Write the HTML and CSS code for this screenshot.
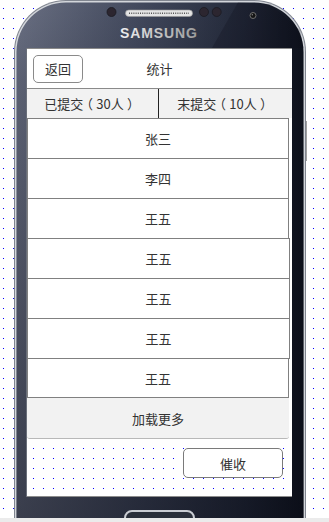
FILE: index.html
```html
<!DOCTYPE html>
<html lang="zh-CN">
<head>
<meta charset="utf-8">
<title>统计</title>
<link rel="stylesheet" href="styles.css">
</head>
<body>
<div class="stage">
  <svg class="device" width="329" height="518" viewBox="0 0 329 518" aria-hidden="true">
    <defs>
      <pattern id="dots" width="10" height="10" patternUnits="userSpaceOnUse" x="3" y="8">
        <rect width="1" height="1" fill="#0000ff"/>
      </pattern>
      <linearGradient id="body" x1="0" y1="0" x2="1" y2="0">
        <stop offset="0" stop-color="#6a7083"/>
        <stop offset="0.45" stop-color="#40475b"/>
        <stop offset="0.8" stop-color="#222838"/>
        <stop offset="1" stop-color="#0e121c"/>
      </linearGradient>
      <linearGradient id="shade" x1="0" y1="0" x2="0" y2="1">
        <stop offset="0" stop-color="#080a14" stop-opacity="0"/>
        <stop offset="0.15" stop-color="#080a14" stop-opacity="0.15"/>
        <stop offset="1" stop-color="#080a14" stop-opacity="0.5"/>
      </linearGradient>
      <linearGradient id="logo" x1="0" y1="0" x2="1" y2="0">
        <stop offset="0" stop-color="#efefef"/>
        <stop offset="1" stop-color="#9c9c9c"/>
      </linearGradient>
    </defs>
    <rect width="329" height="518" fill="#fff"/>
    <rect width="329" height="518" fill="url(#dots)"/>
    <rect x="305" y="121" width="2" height="40" fill="#a0a0a0"/>
    <path d="M14 530 V52 A52 52 0 0 1 66 0 H254 A52 52 0 0 1 306 52 V530 Z" fill="#80858f"/>
    <path d="M15 530 V52 A51 51 0 0 1 66 1 H254 A51 51 0 0 1 305 52 V530 Z" fill="#d3d6db"/>
    <path d="M16.5 530 V52 A49.5 49.5 0 0 1 66 2.5 H254 A49.5 49.5 0 0 1 303.5 52 V530 Z" fill="url(#body)"/>
    <path d="M16.5 530 V52 A49.5 49.5 0 0 1 66 2.5 H254 A49.5 49.5 0 0 1 303.5 52 V530 Z" fill="url(#shade)"/>
    <polygon points="238,2.5 270,4 300,30 303.5,48 212,48" fill="#0a0d18" fill-opacity="0.25"/>
    <rect x="125.5" y="10" width="67" height="6.5" rx="3.25" fill="#e4e4e4" stroke="#9a9a9a" stroke-width="0.6"/>
    <line x1="129" y1="13.3" x2="189" y2="13.3" stroke="#555" stroke-width="1.6" stroke-dasharray="1 1.2"/>
    <circle cx="111.5" cy="12" r="4.5" fill="#2c2630" stroke="#1a1a22" stroke-width="0.8"/>
    <circle cx="204" cy="12" r="4.5" fill="#2c2630" stroke="#1a1a22" stroke-width="0.8"/>
    <circle cx="216.7" cy="12" r="4.5" fill="#2c2630" stroke="#1a1a22" stroke-width="0.8"/>
    <circle cx="253" cy="15.5" r="3" fill="#141414" stroke="#6f6f6f" stroke-width="1"/>
    <circle cx="252.3" cy="14.8" r="0.7" fill="#888"/>
    <text x="120" y="37.5" font-family="Liberation Sans, Arial, sans-serif" font-weight="bold" font-size="14" textLength="77" lengthAdjust="spacing" fill="url(#logo)">SAMSUNG</text>
    <rect x="27" y="48" width="265" height="449" fill="#fff"/>
    <rect x="27" y="48" width="265" height="449" fill="url(#dots)"/>
    <line x1="27" y1="496.5" x2="292" y2="496.5" stroke="#8c8c8c" stroke-width="1"/>
    <line x1="26.5" y1="48" x2="26.5" y2="497" stroke="#6a6f7a" stroke-width="1"/>
    <rect x="125" y="511" width="69" height="20" rx="7" fill="#2a2f3a" stroke="#c9ccd2" stroke-width="2"/>
  </svg>

  <div class="screen">
    <div class="header">
      <button class="btn back">返回</button>
      <div class="title">统计</div>
      <div class="spacer"></div>
    </div>
    <div class="tabs">
      <div class="tab">已提交<span class="paren">（</span>30人<span class="paren">）</span></div>
      <div class="tab tab-right">末提交<span class="paren">（</span>10人<span class="paren">）</span></div>
    </div>
    <div class="list">
      <div class="item">张三</div>
      <div class="item">李四</div>
      <div class="item">王五</div>
      <div class="item wide">王五</div>
      <div class="item wide">王五</div>
      <div class="item wide">王五</div>
      <div class="item">王五</div>
    </div>
    <div class="more">加载更多</div>
    <div class="actions">
      <button class="btn urge">催收</button>
    </div>
  </div>
</div>
</body>
</html>
```

FILE: styles.css
```css
html {
  background: #ebebeb;
}

body {
  margin: 0;
  font-family: "Noto Sans CJK SC", "Noto Sans", "Liberation Sans", sans-serif;
  color: #333;
}

.stage {
  position: relative;
  width: 329px;
  height: 518px;
  overflow: hidden;
  box-sizing: border-box;
  padding: 48px 0 0 27px;
  background: #fff;
}

.device {
  position: absolute;
  left: 0;
  top: 0;
  display: block;
}

.screen {
  position: relative;
  width: 265px;
  height: 448px;
  display: flex;
  flex-direction: column;
  font-size: 13px;
}

.header {
  height: 41px;
  box-sizing: border-box;
  border-top: 1px solid #8a8a8a;
  border-bottom: 1px solid #8a8a8a;
  background: #fff;
  display: grid;
  grid-template-columns: 1fr auto 1fr;
  align-items: center;
}

.title {
  text-align: center;
}

.btn {
  font: inherit;
  color: #333;
  background: #fff;
  border: 1px solid #8a8a8a;
  border-radius: 5px;
  padding: 0;
  box-sizing: border-box;
  display: flex;
  align-items: center;
  justify-content: center;
}

.back {
  justify-self: start;
  width: 50px;
  height: 28px;
  margin-left: 6px;
}

.tabs {
  display: flex;
  height: 29px;
}

.tab {
  width: 131px;
  box-sizing: border-box;
  padding-right: 4px;
  background: #f2f2f2;
  display: flex;
  align-items: center;
  justify-content: center;
}

.paren {
  display: inline-block;
  width: 1em;
  text-align: center;
  font-feature-settings: "halt";
}

.tab-right {
  flex: 1;
  border-left: 1px solid #222;
}

.list {
  display: flex;
  flex-direction: column;
}

.item {
  width: 262px;
  height: 41px;
  box-sizing: border-box;
  border: 1px solid #808080;
  background: #fff;
  margin-top: -1px;
  display: flex;
  align-items: center;
  justify-content: center;
}

.item:first-child {
  margin-top: 0;
}

.item.wide {
  width: 263px;
}

.item:last-child {
  height: 40px;
}

.more {
  width: 262px;
  height: 41px;
  box-sizing: border-box;
  background: #f2f2f2;
  border-bottom: 1px solid #b8b8b8;
  border-radius: 0 0 3px 3px;
  display: flex;
  align-items: center;
  justify-content: center;
}

.actions {
  display: flex;
  justify-content: flex-end;
  padding: 9px 9px 0 0;
}

.urge {
  width: 100px;
  height: 30px;
  border-color: #7a7a7a;
}
```
